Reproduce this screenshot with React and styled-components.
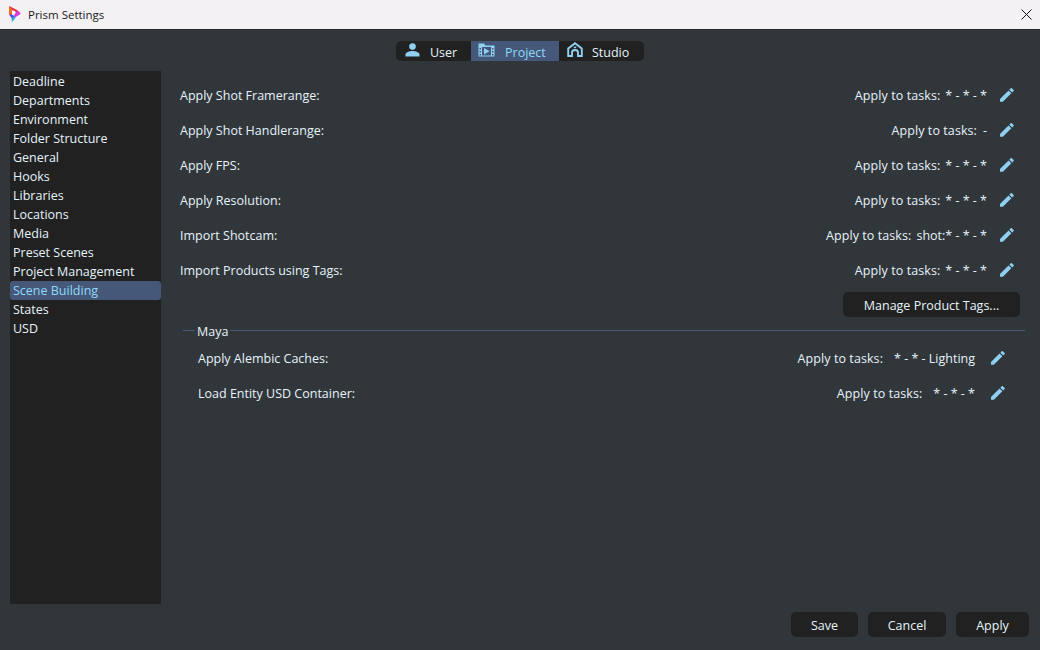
import React from "react";
import styled, { createGlobalStyle } from "styled-components";

const GlobalStyle = createGlobalStyle`
  html, body {
    margin: 0;
    padding: 0;
    background: #31363b;
  }
  * {
    box-sizing: border-box;
  }
`;

const Window = styled.div`
  display: flex;
  flex-direction: column;
  width: 1040px;
  height: 650px;
  overflow: hidden;
  background: #31363b;
  color: #e6f3fa;
  font-family: "Open Sans", "Noto Sans", sans-serif;
  font-size: 12.5px;
`;

const TitleBar = styled.div`
  display: flex;
  align-items: center;
  flex: none;
  height: 30px;
  padding: 0 8px 1px 9px;
  background: #f3f1f3;
  border-bottom: 1px solid #23272b;
  color: #1a1a1a;
  font-size: 11.5px;
`;

const LogoWrap = styled.span`
  display: flex;
  margin-bottom: 1px;
`;

const TitleText = styled.span`
  margin-left: 7px;
  flex: 1;
`;

const TabsRow = styled.div`
  display: flex;
  justify-content: center;
  flex: none;
  padding-top: 11px;
  height: 41px;
`;

const Tabs = styled.div`
  display: flex;
  height: 20px;
  border-radius: 5px;
  overflow: hidden;
  background: #212121;
`;

const Tab = styled.div`
  display: flex;
  align-items: center;
  width: ${(p) => p.$width}px;
  padding-left: ${(p) => p.$pad}px;
  background: ${(p) => (p.$active ? "#45587a" : "transparent")};
  color: ${(p) => (p.$active ? "#8fd8f8" : "#e6f3fa")};
`;

const TabIcon = styled.span`
  display: flex;
  margin-bottom: 3px;
`;

const TabLabel = styled.span`
  margin-left: ${(p) => p.$gap}px;
  padding-top: 2px;
`;

const Body = styled.div`
  display: flex;
  flex: 1;
  min-height: 0;
  padding: 0 0 0 10px;
`;

const Sidebar = styled.div`
  flex: none;
  width: 151px;
  height: 533px;
  padding-top: 1px;
  background: #212121;
`;

const SideItem = styled.div`
  display: flex;
  align-items: center;
  height: 19px;
  padding-left: 3px;
  border-radius: 3px;
  background: ${(p) => (p.$active ? "#45587a" : "transparent")};
  color: ${(p) => (p.$active ? "#8fd8f8" : "#e6f3fa")};
`;

const Content = styled.div`
  display: flex;
  flex-direction: column;
  flex: 1;
  padding: 7px 15px 0 19px;
`;

const Row = styled.div`
  display: flex;
  align-items: center;
  justify-content: space-between;
  height: 35px;
  padding-right: ${(p) => p.$right}px;
  padding-left: ${(p) => p.$left}px;
`;

const RowValue = styled.div`
  display: flex;
  align-items: center;
`;

const TaskLabel = styled.span`
  margin-right: ${(p) => p.$gap}px;
  letter-spacing: 0.08px;
`;

const PencilButton = styled.span`
  display: flex;
  margin-left: ${(p) => p.$gap}px;
  margin-bottom: 2px;
  color: #8fd0f0;
`;

const ManageRow = styled.div`
  display: flex;
  justify-content: flex-end;
  padding: 4px 5px 0 0;
`;

const DarkButton = styled.div`
  display: flex;
  align-items: center;
  justify-content: center;
  width: ${(p) => p.$width}px;
  height: 25px;
  padding-top: 2px;
  border-radius: 5px;
  background: #212121;
  color: #e6f3fa;
`;

const GroupHeader = styled.div`
  display: flex;
  align-items: center;
  margin: 5px 0 2px 3px;
  height: 17px;
  color: #e6f3fa;
`;

const GroupLineShort = styled.div`
  width: 12px;
  height: 1px;
  background: #45587a;
`;

const GroupLine = styled.div`
  flex: 1;
  height: 1px;
  background: #45587a;
`;

const GroupName = styled.span`
  margin: 0 2px;
  padding-top: 2px;
`;

const Footer = styled.div`
  display: flex;
  justify-content: flex-end;
  gap: 10px;
  flex: none;
  height: 38px;
  padding-right: 11px;
`;

const sections = [
  "Deadline",
  "Departments",
  "Environment",
  "Folder Structure",
  "General",
  "Hooks",
  "Libraries",
  "Locations",
  "Media",
  "Preset Scenes",
  "Project Management",
  "Scene Building",
  "States",
  "USD",
];

const topRows = [
  { label: "Apply Shot Framerange:", value: "* - * - *", gap: 5 },
  { label: "Apply Shot Handlerange:", value: "-", gap: 6 },
  { label: "Apply FPS:", value: "* - * - *", gap: 5 },
  { label: "Apply Resolution:", value: "* - * - *", gap: 5 },
  { label: "Import Shotcam:", value: "shot:* - * - *", gap: 5 },
  { label: "Import Products using Tags:", value: "* - * - *", gap: 5 },
];

const mayaRows = [
  { label: "Apply Alembic Caches:", value: "* - * - Lighting", gap: 11 },
  { label: "Load Entity USD Container:", value: "* - * - *", gap: 11 },
];

function Logo() {
  return (
    <svg width="12" height="16" viewBox="0 0 12 16">
      <polygon points="0,0 4,2.5 3,9 0,9" fill="#f2701d" />
      <polygon points="0,0 8,4 11,6.5 7,6 3,3.5" fill="#ea2f4c" />
      <polygon points="7,5 11,6.5 11.5,8 6,11.5 5,10" fill="#d83ce0" />
      <polygon points="0,8.5 3,8.5 6,10.5 3,12.5" fill="#5a49e0" />
      <polygon points="2.5,12 6,10.5 6.5,12 3,16" fill="#2aa8d8" />
      <polygon points="3,4.5 7,6.8 3,9" fill="#ffffff" />
    </svg>
  );
}

function CloseIcon() {
  return (
    <svg width="11" height="11" viewBox="0 0 11 11">
      <path d="M0.5 0.5L10.5 10.5M10.5 0.5L0.5 10.5" stroke="#111" strokeWidth="1" fill="none" />
    </svg>
  );
}

function UserIcon() {
  return (
    <svg width="15" height="14" viewBox="0 0 15 14" fill="#8fd0f0">
      <circle cx="7.5" cy="3.6" r="3.3" />
      <path d="M0.5 13.5V11.6C0.5 9.2 4.5 8 7.5 8S14.5 9.2 14.5 11.6V13.5Z" />
    </svg>
  );
}

function ProjectIcon() {
  return (
    <svg width="17" height="14" viewBox="0 0 17 14">
      <path d="M0.5 0.5H6L7.5 2.5H16.5V3.5H0.5Z" fill="#8fd0f0" />
      <rect x="0.5" y="3" width="16" height="10.5" fill="#8fd0f0" />
      <rect x="4" y="4" width="9" height="8.5" fill="#45587a" />
      <rect x="1.5" y="5" width="1.5" height="1.5" fill="#45587a" />
      <rect x="1.5" y="8" width="1.5" height="1.5" fill="#45587a" />
      <rect x="1.5" y="11" width="1.5" height="1.5" fill="#45587a" />
      <rect x="14" y="5" width="1.5" height="1.5" fill="#45587a" />
      <rect x="14" y="8" width="1.5" height="1.5" fill="#45587a" />
      <rect x="14" y="11" width="1.5" height="1.5" fill="#45587a" />
      <polygon points="6,5 11.5,8.2 6,11.5" fill="#8fd0f0" />
    </svg>
  );
}

function StudioIcon() {
  return (
    <svg width="16" height="15" viewBox="0 0 16 15" fill="none" stroke="#8fd0f0">
      <path d="M1.2 14V6.5L8 1.2L14.8 6.5V14H11V10.5C11 9 10 8 8 8S5 9 5 10.5V14Z" strokeWidth="1.9" />
      <rect x="6.8" y="4.6" width="2.4" height="1.6" fill="#8fd0f0" stroke="none" />
    </svg>
  );
}

function PencilIcon() {
  return (
    <svg width="14" height="14" viewBox="3 3 18.2 18.2" fill="currentColor">
      <path d="M3 17.25V21h3.75L17.81 9.94l-3.75-3.75L3 17.25zM20.71 7.04c.39-.39.39-1.02 0-1.41l-2.34-2.34c-.39-.39-1.02-.39-1.41 0l-1.83 1.83 3.75 3.75 1.83-1.83z" />
    </svg>
  );
}

function SettingRow({ label, value, right, left, gap, pencilGap }) {
  return (
    <Row $right={right} $left={left}>
      <span>{label}</span>
      <RowValue>
        <TaskLabel $gap={gap}>Apply to tasks:</TaskLabel>
        <span>{value}</span>
        <PencilButton $gap={pencilGap}>
          <PencilIcon />
        </PencilButton>
      </RowValue>
    </Row>
  );
}

export default function App() {
  return (
    <Window>
      <GlobalStyle />
      <TitleBar>
        <LogoWrap>
          <Logo />
        </LogoWrap>
        <TitleText>Prism Settings</TitleText>
        <CloseIcon />
      </TitleBar>
      <TabsRow>
        <Tabs>
          <Tab $width={75} $pad={9}>
            <TabIcon>
              <UserIcon />
            </TabIcon>
            <TabLabel $gap={10}>User</TabLabel>
          </Tab>
          <Tab $width={88} $pad={7} $active>
            <TabIcon>
              <ProjectIcon />
            </TabIcon>
            <TabLabel $gap={10}>Project</TabLabel>
          </Tab>
          <Tab $width={85} $pad={8}>
            <TabIcon>
              <StudioIcon />
            </TabIcon>
            <TabLabel $gap={9}>Studio</TabLabel>
          </Tab>
        </Tabs>
      </TabsRow>
      <Body>
        <Sidebar>
          {sections.map((name) => (
            <SideItem key={name} $active={name === "Scene Building"}>
              {name}
            </SideItem>
          ))}
        </Sidebar>
        <Content>
          {topRows.map((row) => (
            <SettingRow key={row.label} {...row} right={11} left={0} pencilGap={13} />
          ))}
          <ManageRow>
            <DarkButton $width={177}>Manage Product Tags...</DarkButton>
          </ManageRow>
          <GroupHeader>
            <GroupLineShort />
            <GroupName>Maya</GroupName>
            <GroupLine />
          </GroupHeader>
          {mayaRows.map((row) => (
            <SettingRow key={row.label} {...row} right={20} left={18} pencilGap={16} />
          ))}
        </Content>
      </Body>
      <Footer>
        <DarkButton $width={67}>Save</DarkButton>
        <DarkButton $width={78}>Cancel</DarkButton>
        <DarkButton $width={73}>Apply</DarkButton>
      </Footer>
    </Window>
  );
}
